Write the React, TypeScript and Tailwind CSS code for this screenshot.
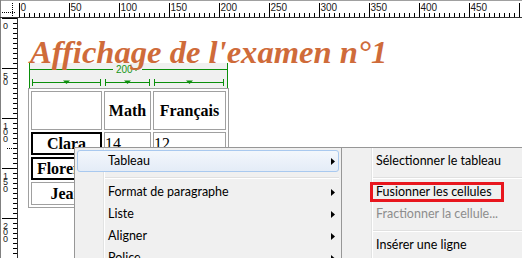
import React from "react";

const RF = "'Liberation Sans', Arial, sans-serif";
const G = "#0b8f0b";

function Corner() {
  return (
    <svg width={18} height={18} className="block">
      <rect width={18} height={18} fill="#fff" />
      <line x1={0} y1={0.5} x2={18} y2={0.5} stroke="#a0a0a0" />
      <line x1={0.5} y1={0} x2={0.5} y2={18} stroke="#808080" />
      <line x1={2} y1={12.5} x2={16} y2={12.5} stroke="#000" strokeDasharray="1 1" />
      <line x1={12.5} y1={3} x2={12.5} y2={17} stroke="#000" strokeDasharray="1 1" />
      <line x1={0} y1={17.5} x2={18} y2={17.5} stroke="#333" />
    </svg>
  );
}

function TopRuler() {
  const items: React.ReactNode[] = [];
  for (let k = 0; k <= 101; k++) {
    const x = 1.5 + 5 * k;
    if (k % 10 === 0) {
      items.push(<line key={"l" + k} x1={x} y1={3} x2={x} y2={17} stroke="#000" />);
      if (k < 100) {
        items.push(
          <text key={"t" + k} x={x + 1} y={11} fontSize={10} fill="#1a1a1a" fontFamily={RF}>
            {k * 5}
          </text>
        );
      }
    } else {
      items.push(<line key={"l" + k} x1={x} y1={13} x2={x} y2={17} stroke="#000" />);
    }
  }
  return (
    <svg width={504} height={18} className="block">
      <rect width={504} height={18} fill="#fff" />
      <line x1={0} y1={0.5} x2={504} y2={0.5} stroke="#a0a0a0" />
      {items}
      <line x1={0} y1={17.5} x2={504} y2={17.5} stroke="#333" />
    </svg>
  );
}

function LeftRuler() {
  const items: React.ReactNode[] = [];
  for (let k = 0; k <= 48; k++) {
    const y = 0.5 + 5 * k;
    if (k % 10 === 0) {
      items.push(<line key={"l" + k} x1={2} y1={y} x2={17} y2={y} stroke="#000" />);
      const s = String(k * 5);
      s.split("").forEach((d, i) => {
        items.push(
          <text key={"t" + k + "_" + i} x={3} y={y + 10 + i * 6.6} fontSize={9} fill="#1a1a1a" fontFamily={RF}>
            {d}
          </text>
        );
      });
    } else {
      items.push(<line key={"l" + k} x1={13} y1={y} x2={17} y2={y} stroke="#000" />);
    }
  }
  return (
    <svg width={18} height={240} className="block">
      <rect width={18} height={240} fill="#fff" />
      <line x1={0.5} y1={0} x2={0.5} y2={240} stroke="#808080" />
      {items}
      <line x1={7} y1={130.5} x2={16} y2={130.5} stroke="#000" strokeDasharray="1 1" />
      <line x1={17.5} y1={0} x2={17.5} y2={240} stroke="#333" />
    </svg>
  );
}

function Band() {
  const segs: [number, number][] = [
    [4, 72],
    [77, 121],
    [126, 195],
  ];
  return (
    <svg width={201} height={25} className="block">
      <rect x={1} y={0} width={199} height={25} fill="#f0f0f0" />
      <line x1={1.5} y1={0} x2={1.5} y2={25} stroke={G} />
      <line x1={199.5} y1={0} x2={199.5} y2={25} stroke={G} />
      <line x1={1.5} y1={6.5} x2={85} y2={6.5} stroke={G} />
      <line x1={114} y1={6.5} x2={199.5} y2={6.5} stroke={G} />
      <text x={88} y={10} fontSize={10} fill="#169616" fontFamily={RF}>
        200
      </text>
      <polygon points="105,5 111,5 108,8" fill={G} />
      {segs.map(([a, b], i) => {
        const c = Math.round((a + b) / 2);
        return (
          <g key={i}>
            <line x1={a + 0.5} y1={16} x2={a + 0.5} y2={23} stroke={G} />
            <line x1={b + 0.5} y1={16} x2={b + 0.5} y2={23} stroke={G} />
            <line x1={a} y1={19.5} x2={b + 1} y2={19.5} stroke={G} />
            <polygon points={`${c - 3},17.5 ${c + 4},17.5 ${c + 0.5},21`} fill={G} />
          </g>
        );
      })}
    </svg>
  );
}

function Arrow() {
  return (
    <svg width={4} height={7} className="absolute right-[3px] top-[7px]">
      <polygon points="0,0 4,3.5 0,7" fill="#000" />
    </svg>
  );
}

function Item({
  label,
  arrow,
  hl,
  disabled,
  pl,
}: {
  label: string;
  arrow?: boolean;
  hl?: boolean;
  disabled?: boolean;
  pl: string;
}) {
  return (
    <div
      className={
        "relative h-[22px] flex items-center border rounded-[3px] whitespace-nowrap " +
        pl +
        " " +
        (hl
          ? "border-[#a9c9ef] bg-gradient-to-b from-[#f3f7fc] to-[#e4ecf7]"
          : "border-transparent") +
        " " +
        (disabled ? "text-[#8d8d8d]" : "text-[#000]")
      }
    >
      {label}
      {arrow && <Arrow />}
    </div>
  );
}

function Sep({ pl }: { pl: string }) {
  return (
    <div className={"h-[9px] pt-[5px] " + pl}>
      <div className="h-[2px] border-t border-[#e0e0e0] border-b border-b-white" />
    </div>
  );
}

function Cell({
  children,
  bold,
  center,
  strong,
}: {
  children?: React.ReactNode;
  bold?: boolean;
  center?: boolean;
  strong?: boolean;
}) {
  return (
    <div
      className={
        "flex items-center overflow-hidden whitespace-nowrap text-[16px] text-black font-['Liberation_Serif',serif] " +
        (strong ? "border-2 border-black " : "border border-[#a0a0a0] ") +
        (bold ? "font-bold " : "") +
        (center ? "justify-center" : "justify-start")
      }
    >
      {children}
    </div>
  );
}

export default function App() {
  return (
    <div className="relative w-[522px] h-[258px] overflow-hidden bg-white">
      <div className="grid grid-cols-[18px_504px] grid-rows-[18px_240px]">
        <Corner />
        <TopRuler />
        <LeftRuler />
        <div className="pl-[10px]">
          <div className="relative z-10 mt-[18px] h-[27px] pl-[2px] leading-[32px] text-[32.6px] font-bold italic text-[#cf6b3a] whitespace-nowrap font-['Liberation_Serif',serif]">
            Affichage de l'examen n°1
          </div>
          <Band />
          <div className="grid w-[201px] grid-cols-[71px_47px_73px] grid-rows-[39px_23px_23px_23px] gap-[2px] p-[2px] border border-[#a0a0a0]">
            <Cell />
            <Cell bold center>
              Math
            </Cell>
            <Cell bold center>
              Français
            </Cell>
            <Cell bold center strong>
              Clara
            </Cell>
            <Cell>14</Cell>
            <Cell>12</Cell>
            <Cell bold center strong>
              Florence
            </Cell>
            <Cell>15</Cell>
            <Cell>13</Cell>
            <Cell bold center>
              Jean
            </Cell>
            <Cell>11</Cell>
            <Cell>16</Cell>
          </div>
        </div>
      </div>

      {/* Main context menu */}
      <div className="absolute left-[74px] top-[147px] w-[268px] h-[125px] border border-[#979797] bg-[#f0f0f0] p-[2px] text-[12.5px] font-['Lato',sans-serif]">
        <div className="absolute left-[28px] top-0 bottom-0 w-[2px] border-l border-l-[#e2e3e3] border-r border-r-white" />
        <div className="relative">
          <Item label="Tableau" arrow hl pl="pl-[30px]" />
          <Sep pl="pl-[28px]" />
          <Item label="Format de paragraphe" arrow pl="pl-[30px]" />
          <Item label="Liste" arrow pl="pl-[30px]" />
          <Item label="Aligner" arrow pl="pl-[30px]" />
          <Item label="Police" arrow pl="pl-[30px]" />
        </div>
      </div>

      {/* Sub menu */}
      <div className="absolute left-[341px] top-[147px] w-[200px] h-[125px] border border-[#979797] bg-[#f0f0f0] p-[2px] text-[12.5px] font-['Lato',sans-serif]">
        <div className="absolute left-[29px] top-0 bottom-0 w-[2px] border-l border-l-[#e2e3e3] border-r border-r-white" />
        <div className="relative">
          <Item label="Sélectionner le tableau" pl="pl-[31px]" />
          <Sep pl="pl-[29px]" />
          <Item label="Fusionner les cellules" pl="pl-[31px]" />
          <Item label="Fractionner la cellule..." disabled pl="pl-[31px]" />
          <Sep pl="pl-[29px]" />
          <Item label="Insérer une ligne" pl="pl-[31px]" />
        </div>
      </div>

      {/* Annotation box */}
      <div className="absolute left-[370px] top-[182px] w-[134px] h-[20px] border-[3px] border-[#e8161e]" />
    </div>
  );
}
